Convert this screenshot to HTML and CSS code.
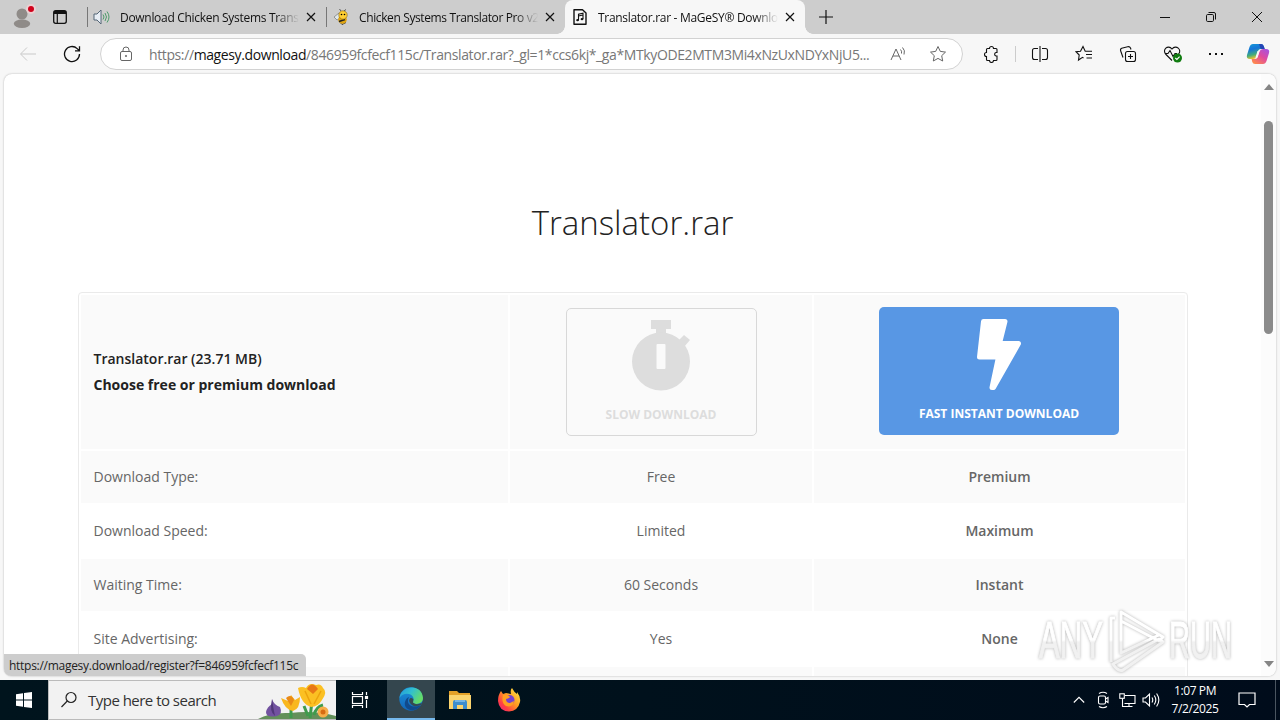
FILE: index.html
```html
<!DOCTYPE html>
<html lang="en">
<head>
  <meta charset="UTF-8">
  <title>Translator.rar - MaGeSY® Download</title>
  <link rel="stylesheet" href="styles.css">
</head>
<body>
  <div class="browser">
    <div class="tab-strip">
      <div class="profile">
        <svg width="24" height="24" viewBox="0 0 24 24">
          <circle cx="10" cy="8" r="5.5" fill="#8f8b88"/>
          <ellipse cx="10" cy="17.7" rx="8.2" ry="4.2" fill="#8f8b88"/>
          <circle cx="19" cy="3" r="5" fill="#ecd0d2"/>
          <circle cx="19" cy="3" r="3" fill="#d0021b"/>
        </svg>
      </div>
      <svg class="tab-actions" width="16" height="16" viewBox="0 0 16 16" fill="none" stroke="#111">
        <rect x="1.7" y="1.7" width="12.6" height="12.6" rx="2" stroke-width="1.3"/>
        <path d="M2 3.5h12" stroke-width="3"/>
        <path d="M5.3 4v10" stroke-width="1.2"/>
      </svg>
      <div class="tab first">
        <svg class="favicon" width="18" height="18" viewBox="0 0 18 18">
          <path d="M1 6h3l4-4v14l-4-4H1z" fill="#e8eef5" stroke="#556677"/>
          <path d="M10 6.5q2 2.5 0 5M12 5q3 4 0 8M14 3.5q4 5.5 0 11" fill="none" stroke="#4d9b6b"/>
        </svg>
        <span class="tab-title">Download Chicken Systems Trans</span>
        <svg class="close" width="10" height="10" viewBox="0 0 10 10"><path d="M1 1l8 8M9 1l-8 8"/></svg>
      </div>
      <div class="tab second">
        <svg class="favicon" width="18" height="18" viewBox="0 0 18 18">
          <path d="M2 9l5-4 3 4-5 3z" fill="#dfe8ec" stroke="#777" stroke-width=".7"/>
          <path d="M7 13l3 3.5 4-2" stroke="#333" fill="none"/>
          <ellipse cx="10.5" cy="11.5" rx="4.3" ry="4.3" fill="#e0a510"/>
          <path d="M7 13.5l6-2" stroke="#222" stroke-width="1.5"/>
          <circle cx="11" cy="7" r="4.2" fill="#ffcf33" stroke="#8a6410" stroke-width=".6"/>
          <path d="M9 3L7.5 1M12 3l2-1.5" stroke="#555"/>
          <circle cx="9.5" cy="6.5" r=".8"/><circle cx="12.5" cy="6.5" r=".8"/>
        </svg>
        <span class="tab-title">Chicken Systems Translator Pro v2</span>
        <svg class="close" width="10" height="10" viewBox="0 0 10 10"><path d="M1 1l8 8M9 1l-8 8"/></svg>
      </div>
      <div class="tab active">
        <svg class="favicon" width="18" height="18" viewBox="0 0 18 18" fill="none" stroke="#111">
          <path d="M3 1.7h8.5L15 5v11.3H3z" stroke-width="1.4" stroke-linejoin="round"/>
          <path d="M7.5 12V6.2l4.5-1V11M7.5 8l4.5-1" stroke-width="1.1"/>
          <ellipse cx="6.6" cy="12.2" rx="1.4" ry="1.1" fill="#111" stroke="none"/>
          <ellipse cx="11" cy="11.2" rx="1.4" ry="1.1" fill="#111" stroke="none"/>
        </svg>
        <span class="tab-title">Translator.rar - MaGeSY® Downlo</span>
        <svg class="close" width="10" height="10" viewBox="0 0 10 10"><path d="M1 1l8 8M9 1l-8 8"/></svg>
      </div>
      <svg class="new-tab" width="14" height="14" viewBox="0 0 14 14"><path d="M7 0v14M0 7h14"/></svg>
      <div class="window-buttons">
        <svg width="12" height="12" viewBox="0 0 12 12"><path d="M1 6.5h10"/></svg>
        <svg width="12" height="12" viewBox="0 0 12 12"><rect x="1.5" y="3.5" width="7" height="7" rx="1.2"/><path d="M3.5 1.5h5.5q1.5 0 1.5 1.5v5.5"/></svg>
        <svg width="12" height="12" viewBox="0 0 12 12"><path d="M1 1l10 10M11 1L1 11"/></svg>
      </div>
    </div>

    <div class="toolbar">
      <svg class="back" width="18" height="16" viewBox="0 0 18 16"><path d="M17 8H2M8 1.5L1.5 8 8 14.5"/></svg>
      <svg class="reload" width="18" height="18" viewBox="0 0 18 18"><path d="M16.5 9a7.5 7.5 0 1 1-2.3-5.4l2 2M16.5 1.300v4.500H12"/></svg>
      <div class="address">
        <svg class="lock" width="14" height="16" viewBox="0 0 14 16"><rect x="1.5" y="5.5" width="11" height="9" rx="1.5"/><path d="M4 5.5V4q0-3 3-3t3 3v1.5"/><circle cx="7" cy="10" r=".7"/></svg>
        <span class="url">https://<b>magesy.download</b>/846959fcfecf115c/Translator.rar?_gl=1*ccs6kj*_ga*MTkyODE2MTM3Mi4xNzUxNDYxNjU5...</span>
        <svg class="read" width="17" height="16" viewBox="0 0 17 16"><path d="M1 14L6 3l5 11M3 10h6M10.5 3.5q1.5 1.5 1 4M12.5 1.5q3 3 1.5 7"/></svg>
        <svg class="star" width="18" height="18" viewBox="0 0 18 18"><path d="M9 1.5l2.3 4.9 5.2.7-3.8 3.6 1 5.3L9 13.4 4.3 16l1-5.3L1.5 7.1l5.2-.7z"/></svg>
      </div>
      <div class="tools">
        <svg width="18" height="18" viewBox="0 0 18 18"><path d="M5.5 3.5h2a2 2 0 0 1 4 0H14q1 0 1 1v3h-1a1.800 1.800 0 0 0 0 3.500h1v3.500q0 1-1 1h-2.500a2 2 0 0 1-4 0h-2q-1 0-1-1V11.500a2 2 0 0 1 0-4v-3q0-1 1-1z"/></svg>
        <i class="separator"></i>
        <svg width="18" height="18" viewBox="0 0 18 18"><path d="M7 3.5H3.5q-2 0-2 2v7q0 2 2 2H7M11 3.5h3.5q2 0 2 2v7q0 2-2 2H11M9 1v16"/></svg>
        <svg width="18" height="18" viewBox="0 0 18 18"><path d="M8.500 13L7.500 12.300 3.500 15l.7-5L1 6.700l4.500-.5L8 1.500l2.200 4.700H17M11 9.500h6M11.500 13H17"/></svg>
        <svg width="18" height="18" viewBox="0 0 18 18"><rect x="6.5" y="6.5" width="10" height="10" rx="2"/><path d="M11.500 9v5M9 11.500h5M4 12.500L1.700 6q-.7-2 1-2.700l6-1.600q2-.5 2.800 1.300L12 4.500"/></svg>
        <svg width="20" height="18" viewBox="0 0 20 18"><path d="M9 15.500L3 9.500C-1.500 5 5-1 9 4c4-5 10.500 1 6.500 5M2 8.500h3l2-3 3 6 2-3h2"/><circle cx="14.5" cy="13" r="4.5" fill="#107c10" stroke="none"/><path d="M12.300 13l1.600 1.500 2.700-2.800" stroke="#fff"/></svg>
        <svg width="18" height="18" viewBox="0 0 18 18"><path d="M2 9h2M8 9h2M14 9h2" stroke-width="2"/></svg>
      </div>
      <svg class="copilot" width="24" height="22" viewBox="0 0 24 22">
        <defs>
          <linearGradient id="cool" x1="0" y1="0" x2=".3" y2="1"><stop offset="0" stop-color="#169bd5"/><stop offset=".4" stop-color="#1574d8"/><stop offset=".75" stop-color="#42ac7c"/><stop offset="1" stop-color="#f3c22b"/></linearGradient>
          <linearGradient id="warm" x1="1" y1="0" x2=".2" y2="1"><stop offset="0" stop-color="#9f55e8"/><stop offset=".5" stop-color="#df4aa0"/><stop offset="1" stop-color="#ff8a4c"/></linearGradient>
        </defs>
        <path d="M7 1h8q2 0 2.700 2l1 3h-4q-2 0-2.700 2l-1.700 5.500Q9.500 16 7 16H4q-4 0-3-4l2.500-8Q4.500 1 7 1z" fill="url(#cool)"/>
        <path d="M17 21H9q-2 0-2.700-2l-.7-3H9q2 0 2.700-2l1.800-5.500Q14.300 6 17 6h3q4 0 3 4l-2.500 8q-1 3-3.500 3z" fill="url(#warm)"/>
        <path d="M13 1h2q2 0 2.700 2l1 3h-4z" fill="#2345b5"/>
        <path d="M13.500 8h-2l-2 6.500h2z" fill="#f7f7f7"/>
      </svg>
    </div>

    <div class="viewport">
      <div class="page">
        <h1>Translator.rar</h1>
        <div class="plans">
          <div class="cell head file">
            <span>Translator.rar (23.71 MB)</span>
            <strong>Choose free or premium download</strong>
          </div>
          <div class="cell head">
            <a class="download slow">
              <svg width="58" height="71" viewBox="0 0 58 71" fill="#ddd">
                <path d="M19 0h20v9h-5v7H24V9h-5z"/>
                <circle cx="29" cy="41.5" r="29"/>
                <path d="M46 21l6-6 6 5-6 7z"/>
                <rect x="24.5" y="24" width="9" height="25" rx="1" fill="#fafafa"/>
              </svg>
              <span>SLOW DOWNLOAD</span>
            </a>
          </div>
          <div class="cell head">
            <a class="download fast">
              <svg width="46" height="71" viewBox="0 0 46 71" fill="#fff" stroke="#fff" stroke-width="5" stroke-linejoin="round">
                <path d="M7.500 2.500H29L23.500 24.500h19L17.500 68.500H16L22.500 38H3.500z"/>
              </svg>
              <span>FAST INSTANT DOWNLOAD</span>
            </a>
          </div>
          <div class="cell shade">Download Type:</div><div class="cell shade free">Free</div><div class="cell shade premium">Premium</div>
          <div class="cell">Download Speed:</div><div class="cell free">Limited</div><div class="cell premium">Maximum</div>
          <div class="cell shade">Waiting Time:</div><div class="cell shade free">60 Seconds</div><div class="cell shade premium">Instant</div>
          <div class="cell">Site Advertising:</div><div class="cell free">Yes</div><div class="cell premium">None</div>
          <div class="cell shade"></div><div class="cell shade"></div><div class="cell shade"></div>
        </div>
      </div>
      <div class="scrollbar">
        <svg width="10" height="6" viewBox="0 0 10 6"><path d="M0 6l5-6 5 6z"/></svg>
        <div class="thumb"></div>
        <svg width="10" height="6" viewBox="0 0 10 6"><path d="M0 0l5 6 5-6z"/></svg>
      </div>
    </div>
    <div class="status">https://magesy.download/register?f=846959fcfecf115c</div>
  </div>

  <svg class="watermark" width="210" height="74" viewBox="0 0 210 74">
    <defs><linearGradient id="fade" gradientUnits="userSpaceOnUse" x1="0" y1="0" x2="0" y2="72"><stop offset=".5" stop-color="#fff"/><stop offset=".53" stop-color="#f1f1f1"/></linearGradient></defs>
    <g class="mark-text">
      <text x="4" y="54" textLength="64" lengthAdjust="spacingAndGlyphs">ANY</text>
      <text x="134" y="54" textLength="63" lengthAdjust="spacingAndGlyphs">RUN</text>
    </g>
    <path class="mark-line" d="M86 8l42 25-4 4-38-20zM86 17v32l38-18M80 14h-4v44M78 60l46-25 4 3-40 28q-5 2-10-6z"/>
  </svg>

  <div class="taskbar">
    <div class="start">
      <svg width="16" height="16" viewBox="0 0 16 16" fill="#fff"><path d="M0 2.200L7 1.200V7.500H0zM8 1l8-1v7.500H8zM0 8.500h7v6.300L0 13.800zM8 8.500h8V16L8 15z"/></svg>
    </div>
    <div class="search">
      <svg width="18" height="18" viewBox="0 0 18 18" fill="none" stroke="#222" stroke-width="1.2"><circle cx="10" cy="6.5" r="5"/><path d="M6.3 10L.5 16"/></svg>
      <span>Type here to search</span>
      <svg class="flowers" width="80" height="38" viewBox="0 0 80 38">
        <path d="M2 38q12-7 32-6 25-3 46 3v3z" fill="#63905a"/>
        <path d="M35 37V27M54 37l2-17M52 35l-4-10M58 34q2-8 9-10" stroke="#3f9b4d" stroke-width="3" fill="none"/>
        <path d="M16 18q2 6 8 8 3 7-3 9-11 2-11-4 1-5 6-8z" fill="#7252a0"/>
        <path d="M16 18q1 8 3 17-6-4-3-17z" fill="#503779"/>
        <path d="M25 17l7 3 3-6 4 5 5-3q0 12-7 14-8-1-12-13z" fill="#f9b71e"/>
        <path d="M30 17q5-5 8 2l-3 6z" fill="#e98a17"/>
        <path d="M42 7q4-2 8 0 3-6 10-3 5-2 7 3 5 4-1 12-4 7-11 7-10-3-13-19z" fill="#fbc023"/>
        <path d="M51 8q5-9 11 0l-5 5z" fill="#e87815"/>
        <path d="M49 10l6 13M65 10l-7 13" stroke="#eca30d" stroke-width="1.5"/>
        <circle cx="67" cy="31" r="5.5" fill="#f6ad49"/><circle cx="67" cy="31" r="2.5" fill="#d86b12"/>
      </svg>
    </div>
    <div class="task">
      <svg width="18" height="18" viewBox="0 0 18 18" fill="none" stroke="#fff" stroke-width="1.2"><path d="M1.5 1v2.500h10V1M1.500 17v-2.500h10V17M15.500 1v3M15.500 9v8"/><rect x="1.500" y="5.500" width="10" height="7"/><rect x="14.500" y="5.500" width="2" height="2" fill="#fff"/></svg>
    </div>
    <div class="task open">
      <svg width="24" height="24" viewBox="0 0 24 24">
        <defs>
          <linearGradient id="wave" x1="0" y1="0" x2="1" y2=".5"><stop offset="0" stop-color="#2398dc"/><stop offset=".5" stop-color="#31bfd0"/><stop offset="1" stop-color="#65dc67"/></linearGradient>
          <linearGradient id="deep" x1="0" y1="0" x2="0" y2="1"><stop offset="0" stop-color="#1b92dd"/><stop offset="1" stop-color="#1265b6"/></linearGradient>
        </defs>
        <circle cx="12" cy="12" r="11.7" fill="url(#deep)"/>
        <path d="M.5 11C2-2 23-4 24 11c0 6-7 7-10 5-1.500-1 1-2 .5-5C13 6 4 5 .5 11z" fill="url(#wave)"/>
        <path d="M10 10c-4 8 4 12 12 8-5 9-18 5-16-3q1-4 4-5z" fill="#114a8b"/>
        <path d="M14 15.500q3 3 9 .5l-1 2q-8 3-11-2-2-3 .5-5 2-.5 3 1.500z" fill="#354a51"/>
      </svg>
    </div>
    <div class="task">
      <svg width="22" height="20" viewBox="0 0 22 20">
        <path d="M0 1h8l2 2h11v4H0z" fill="#e4a128"/><path d="M0 5h22v14H0z" fill="#fbd46e"/>
        <path d="M4 19v-7q0-2 2-2h10q2 0 2 2v7h-4v-4H8v4z" fill="#3e8ece"/><path d="M6 10h10v2H6z" fill="#76b6e5"/>
      </svg>
    </div>
    <div class="task">
      <svg width="24" height="24" viewBox="0 0 24 24">
        <defs><linearGradient id="fire" x1="1" y1="0" x2="0" y2="1"><stop offset="0" stop-color="#fff04a"/><stop offset=".45" stop-color="#ff9b22"/><stop offset=".75" stop-color="#ff3d45"/><stop offset="1" stop-color="#e5268b"/></linearGradient></defs>
        <path d="M4 3l2 3 3-1 5 1q-1-4 1-6 2 4 5 6V4q4 5 3 10-2 9-11 9.500Q2 23 1 13q0-6 3-10z" fill="url(#fire)"/>
        <circle cx="12.5" cy="12" r="5" fill="#7642cf"/><path d="M6 7q5-1 7 2-2 2-4 2 0 4 4 4l4-2q-1 7-8 5-5-3-3-11z" fill="#ff9f21"/>
      </svg>
    </div>
    <div class="tray">
      <svg width="12" height="18" viewBox="0 0 12 18"><path d="M.8 11.500L6 6.300l5.200 5.200"/></svg>
      <svg width="12" height="18" viewBox="0 0 12 18"><path d="M2 2.500q4-2.500 8 0M2 15.500q4 2.500 8 0"/><rect x="1.500" y="5" width="7" height="8" rx="1.500"/><path d="M8.500 8l2.500-1.500v5L8.500 10"/></svg>
      <svg width="17" height="18" viewBox="0 0 17 18"><path d="M6 4.500h10v8H5.500M3.500 7.500v8h10M10 12.500v3"/><rect x=".8" y="2.800" width="4.500" height="4.500"/></svg>
      <svg width="18" height="18" viewBox="0 0 18 18"><path d="M1 7h2.500l4-4v12l-4-4H1zM10 6.500q1.500 2.500 0 5M12.300 4.500q3 4.500 0 9M14.600 2.500q4.500 6.500 0 13"/></svg>
    </div>
    <div class="clock"><span>1:07 PM</span><span>7/2/2025</span></div>
    <svg class="notify" width="18" height="18" viewBox="0 0 18 18"><path d="M1 2h16v11.500h-5.500L9 16l-2.500-2.500H1z"/></svg>
    <div class="show-desktop"></div>
  </div>
</body>
</html>
```
FILE: styles.css
```css
* {
  box-sizing: border-box;
}
body {
  margin: 0;
  width: 1280px;
  height: 720px;
  overflow: hidden;
  position: relative;
  font-family: "Open Sans", "Noto Sans", sans-serif;
}
svg {
  display: block;
  flex: none;
}
.browser {
  position: relative;
  height: 680px;
  background: #f7f7f7;
}
.tab-strip {
  display: flex;
  align-items: center;
  height: 34px;
  background: #cdcdcd;
}
.profile {
  margin-left: 12px;
  padding-top: 3px;
  height: 28px;
}
.profile svg {
  overflow: visible;
}
.tab-actions {
  margin: 0 19px 0 16px;
}
.tab {
  display: flex;
  align-items: center;
  width: 239px;
  height: 34px;
  padding: 0 10px 0 6px;
  font-size: 12px;
  letter-spacing: -0.38px;
  color: #111;
}
.tab.first,
.tab.second {
  background: linear-gradient(#777, #777) left center / 1px 20px no-repeat;
}
.tab-title {
  flex: 1;
  margin: 0 5px 0 9px;
  white-space: nowrap;
  -webkit-mask-image: linear-gradient(90deg, #000 86%, transparent 99%);
  mask-image: linear-gradient(90deg, #000 86%, transparent 99%);
}
.tab.first .tab-title {
  letter-spacing: -0.3px;
}
.tab.active {
  position: relative;
  width: 240px;
  background: #f7f7f7;
  border-radius: 8px 8px 0 0;
}
.tab.active .tab-title {
  margin-left: 9px;
  letter-spacing: -0.3px;
}
.tab.active::before,
.tab.active::after {
  content: "";
  position: absolute;
  bottom: 0;
  width: 8px;
  height: 8px;
}
.tab.active::before {
  right: 100%;
  background: radial-gradient(circle at 0 0, transparent 7.5px, #f7f7f7 8px);
}
.tab.active::after {
  left: 100%;
  background: radial-gradient(circle at 100% 0, transparent 7.5px, #f7f7f7 8px);
}
.close {
  fill: none;
  stroke: #111;
  stroke-width: 1.2;
}
.new-tab {
  margin-left: 14px;
  stroke: #111;
  stroke-width: 1.2;
}
.window-buttons {
  display: flex;
  gap: 34px;
  margin-left: auto;
  margin-right: 17px;
  fill: none;
  stroke: #111;
}
.toolbar {
  display: flex;
  align-items: center;
  height: 40px;
  padding: 0 11px 0 19px;
  fill: none;
}
.back {
  stroke: #c9c9c9;
}
.reload {
  margin: 0 19px 0 26px;
  stroke: #111;
  stroke-width: 1.3;
}
.address {
  display: flex;
  align-items: center;
  width: 863px;
  height: 32px;
  padding: 0 15px 0 18px;
  background: #fff;
  border: 1px solid #d2d2d2;
  border-radius: 16px;
  stroke: #666;
}
.url {
  width: 722px;
  margin-left: 16px;
  font-size: 14px;
  letter-spacing: -0.39px;
  white-space: nowrap;
  color: #777;
}
.url b {
  font-weight: 400;
  color: #111;
}
.read {
  margin: 0 22px 0 19px;
}
.tools {
  display: flex;
  align-items: center;
  gap: 26px;
  margin-left: 19px;
  stroke: #111;
  stroke-width: 1.1;
}
.tools svg:nth-of-type(5) {
  margin-right: -2px;
}
.separator {
  width: 1px;
  height: 16px;
  margin: 0 -11px;
  background: #ccc;
}
.copilot {
  margin-left: auto;
  margin-right: -1px;
}
.viewport {
  display: flex;
  width: 1272px;
  height: 602px;
  margin-left: 4px;
  overflow: hidden;
  background: #fff;
  border-radius: 8px;
  box-shadow: 0 0 2px rgba(0, 0, 0, 0.3);
}
.page {
  width: 1257px;
}
h1 {
  margin: 125px 0 0;
  height: 48px;
  line-height: 48px;
  text-align: center;
  font-size: 33px;
  font-weight: 300;
  color: #222;
}
.plans {
  display: grid;
  grid-template-columns: 427px 302px 371px;
  grid-template-rows: 154px;
  grid-auto-rows: 52px;
  gap: 2px;
  width: 1110px;
  margin: 45px 0 0 74px;
  padding: 2px;
  border: 1px solid #eaeaea;
  border-radius: 4px;
}
.cell {
  display: flex;
  align-items: center;
  padding: 0 0 2px 12.5px;
  font-size: 14px;
  color: #666;
}
.shade,
.head {
  background: #fafafa;
}
.free,
.premium,
.head {
  justify-content: center;
  padding: 0 0 2px;
}
.head {
  padding: 0;
}
.premium {
  font-weight: 600;
}
.file {
  flex-direction: column;
  align-items: flex-start;
  padding-left: 12.5px;
  line-height: 26px;
  color: #222;
  font-weight: 600;
}
.file strong {
  font-weight: 700;
}
.download {
  display: flex;
  flex-direction: column;
  align-items: center;
  height: 128px;
  padding-top: 12px;
  border-radius: 5px;
  font-size: 12px;
  font-weight: 700;
  line-height: 16px;
}
.download span {
  margin-top: 16px;
}
.slow {
  width: 191px;
  padding-top: 11px;
  border: 1px solid #d8d8d8;
  color: #ddd;
}
.fast {
  width: 240px;
  margin: -2px 1px 0 0;
  background: #5897e4;
  color: #fff;
}
.scrollbar {
  display: flex;
  flex-direction: column;
  align-items: center;
  width: 15px;
  padding: 10px 0 9px;
  background: #fcfcfc;
  fill: #858585;
}
.thumb {
  width: 9px;
  height: 213px;
  margin: 31px 0 auto;
  border-radius: 5px;
  background: #8b8b8b;
}
.status {
  position: absolute;
  left: 4px;
  bottom: 4px;
  width: 302px;
  height: 22px;
  padding-left: 5px;
  line-height: 23px;
  font-size: 12px;
  letter-spacing: -0.28px;
  white-space: nowrap;
  color: #222;
  background: #cdcdcd;
  border-radius: 0 5px 0 7px;
}
.watermark {
  position: absolute;
  left: 1035px;
  top: 604px;
  filter: drop-shadow(0 0 1.5px rgba(0, 0, 0, 0.3));
}
.mark-text {
  font: 400 51px "Liberation Sans", sans-serif;
  fill: url(#fade);
  stroke: url(#fade);
  stroke-width: 1;
}
.mark-line {
  fill: none;
  stroke: url(#fade);
  stroke-width: 3;
  stroke-linejoin: round;
}
.taskbar {
  display: flex;
  align-items: center;
  height: 40px;
  color: #fff;
  background: linear-gradient(90deg, #00141d, #00111c 50%, #000c1b);
}
.start {
  display: flex;
  justify-content: center;
  width: 48px;
}
.search {
  display: flex;
  align-items: center;
  width: 288px;
  height: 40px;
  padding-left: 12px;
  font-size: 15px;
  letter-spacing: -0.52px;
  color: #333;
  background: #f2f2f2;
  border: 1px solid #bbb;
  border-right: 0;
}
.search span {
  margin-left: 9px;
}
.flowers {
  align-self: flex-end;
  margin-left: auto;
}
.task {
  display: flex;
  align-items: center;
  justify-content: center;
  width: 49px;
  height: 40px;
}
.search + .task {
  width: 51px;
  padding-right: 3px;
}
.open {
  width: 48px;
  background: #34464e;
  border-bottom: 2px solid #76b9ed;
}
.tray {
  display: grid;
  grid-template-columns: repeat(4, 24px);
  justify-items: center;
  margin-left: auto;
  fill: none;
  stroke: #fff;
  stroke-width: 1.1;
}
.clock {
  display: flex;
  flex-direction: column;
  align-items: center;
  width: 56px;
  margin: 0 15px 0 4px;
  line-height: 18px;
  font-size: 12px;
  letter-spacing: -0.4px;
}
.notify {
  margin-right: 19px;
  fill: none;
  stroke: #fff;
  stroke-width: 1.2;
}
.show-desktop {
  width: 5px;
  height: 40px;
  border-left: 1px solid #4a5560;
}
```
